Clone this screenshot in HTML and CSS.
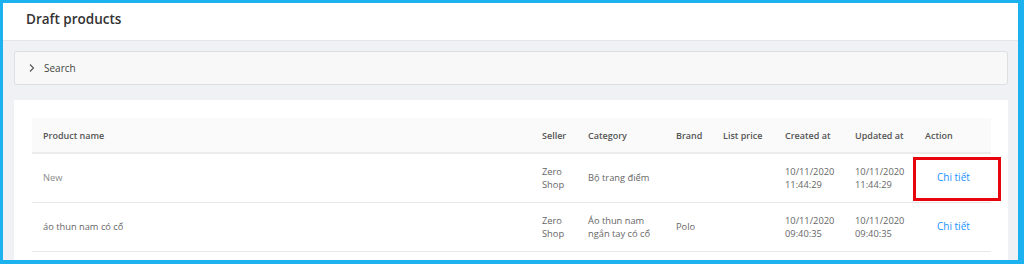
FILE: index.html
```html
<!doctype html>
<html>
<head>
<meta charset="utf-8">
<title>Draft products</title>
<link rel="stylesheet" href="styles.css">
</head>
<body>
<div id="frame">

    <!-- Page title -->
    <header class="page-header">
        <h1>Draft products</h1>
    </header>

    <section class="page-body">
        <!-- Collapsed search panel -->
        <div class="search-panel">
            <svg class="chevron" width="8" height="10" viewBox="0 0 8 10"><path d="M2 1.5 L5.5 5 L2 8.5" fill="none" stroke="#555" stroke-width="1.1"/></svg>
            <span>Search</span>
        </div>

        <!-- Product table -->
        <div class="card">
            <table class="grid">
                <colgroup>
                    <col style="width:500px">
                    <col style="width:46px">
                    <col style="width:88px">
                    <col style="width:47px">
                    <col style="width:62px">
                    <col style="width:70px">
                    <col style="width:70px">
                    <col style="width:76px">
                </colgroup>
                <thead>
                    <tr>
                        <th>Product name</th>
                        <th>Seller</th>
                        <th>Category</th>
                        <th>Brand</th>
                        <th>List price</th>
                        <th>Created at</th>
                        <th>Updated at</th>
                        <th>Action</th>
                    </tr>
                </thead>
                <tbody>
                    <tr>
                        <td class="muted">New</td>
                        <td>Zero<br>Shop</td>
                        <td>Bộ trang điểm</td>
                        <td></td>
                        <td></td>
                        <td>10/11/2020<br>11:44:29</td>
                        <td>10/11/2020<br>11:44:29</td>
                        <td class="action"><a href="#">Chi tiết</a><span class="marker"></span></td>
                    </tr>
                    <tr>
                        <td>áo thun nam có cổ</td>
                        <td>Zero<br>Shop</td>
                        <td>Áo thun nam<br>ngắn tay có cổ</td>
                        <td>Polo</td>
                        <td></td>
                        <td>10/11/2020<br>09:40:35</td>
                        <td>10/11/2020<br>09:40:35</td>
                        <td class="action"><a href="#">Chi tiết</a></td>
                    </tr>
                </tbody>
            </table>
        </div>
    </section>
</div>
</body>
</html>
```

FILE: styles.css
```css
* {
    margin: 0;
    padding: 0;
    box-sizing: border-box;
}
html, body {
    height: 100%;
}
body {
    font-family: "Open Sans", sans-serif;
    color: #666;
    background: #1cb2ef;
    overflow: hidden;
}
#frame {
    height: 264px;
    border-style: solid;
    border-color: #1cb2ef;
    border-width: 3px 6px 4px 3px;
    background: #f0f1f4;
    display: flex;
    flex-direction: column;
}

/* header */
.page-header {
    height: 38px;
    background: #fff;
    border-bottom: 1px solid #e4e5e8;
    padding-left: 23px;
    display: flex;
    align-items: center;
    flex-shrink: 0;
}
.page-header h1 {
    font-size: 13.5px;
    font-weight: 600;
    color: #333;
    margin-top: -5px;
}

/* body */
.page-body {
    padding: 10px 10px 0 11px;
    flex: 1;
    min-height: 0;
    display: flex;
    flex-direction: column;
}
.search-panel {
    height: 34px;
    flex-shrink: 0;
    background: #f8f8f8;
    border: 1px solid #dedfe2;
    border-radius: 3px;
    display: flex;
    align-items: center;
    padding-left: 13px;
    font-size: 10px;
    color: #444;
}
.search-panel .chevron {
    margin-right: 8px;
}
.card {
    margin-top: 15px;
    background: #fff;
    padding: 18px 17px 0 18px;
    flex: 1;
    min-height: 0;
    overflow: hidden;
}

/* table */
table {
    width: 100%;
    border-collapse: collapse;
    table-layout: fixed;
    font-size: 9.3px;
    line-height: 13px;
}
th {
    background: #fafafa;
    height: 35px;
    text-align: left;
    font-weight: 600;
    font-size: 9px;
    color: #555;
    padding: 0 10px;
    white-space: nowrap;
    border-bottom: 2px solid #ececec;
}
th:first-child, td:first-child {
    padding-left: 11px;
}
td {
    height: 49px;
    padding: 0 10px;
    border-bottom: 1px solid #e8e8e8;
    color: #666;
}
td.muted {
    color: #8c8c8c;
}
td.action {
    position: relative;
}
td.action a {
    color: #1890ff;
    text-decoration: none;
    font-size: 10px;
    padding-left: 12px;
}
.marker {
    position: absolute;
    left: -2px;
    top: 3px;
    width: 88px;
    height: 44px;
    border: 3px solid #e8040c;
}
```
